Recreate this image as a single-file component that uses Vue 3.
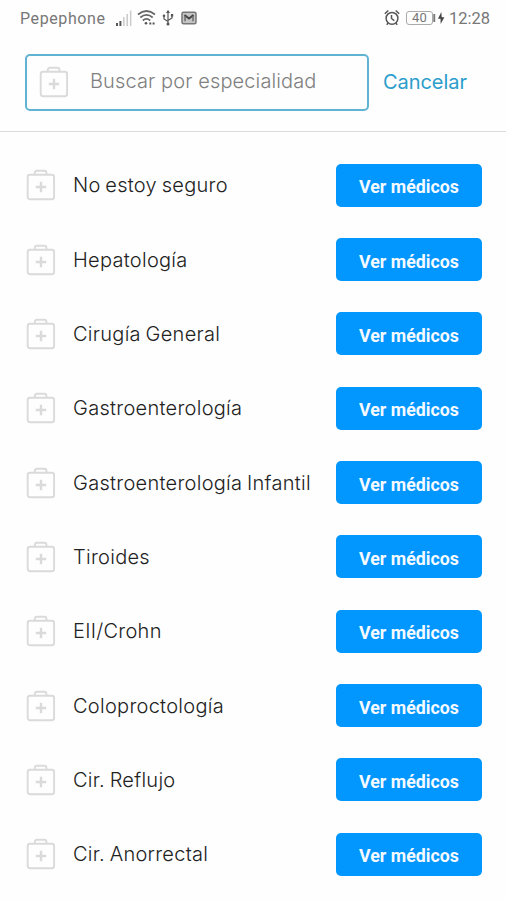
<script setup>
import { h } from 'vue'

const specialties = [
  'No estoy seguro',
  'Hepatología',
  'Cirugía General',
  'Gastroenterología',
  'Gastroenterología Infantil',
  'Tiroides',
  'EII/Crohn',
  'Coloproctología',
  'Cir. Reflujo',
  'Cir. Anorrectal',
]

const KitIcon = () =>
  h('svg', { width: 30, height: 32, viewBox: '0 0 30 32', fill: 'none', stroke: 'currentColor' }, [
    h('rect', { x: 1.7, y: 5.7, width: 26.4, height: 24.6, rx: 2.2, 'stroke-width': 1.9 }),
    h('path', { d: 'M8.8 5.5V3.8Q8.8 1.8 10.8 1.8H18.4Q20.4 1.8 20.4 3.8V5.5', 'stroke-width': 1.9 }),
    h('path', { d: 'M15 12.8V23.2M9.8 18H20.2', 'stroke-width': 2.4 }),
  ])
</script>

<template>
  <main class="screen">
    <header class="status">
      <span class="carrier">Pepephone</span>
      <svg class="signal" width="17" height="17" viewBox="0 0 17 17">
        <path d="M1 13h2v3H1zM4.4 11h2v5h-2z" fill="#555" />
        <path d="M8 7h1.6v9H8zM11.4 4H13v12h-1.6zM14.9 .5h1.5V16h-1.5z" fill="#ccc" />
      </svg>
      <svg class="wifi" width="20" height="18" viewBox="0 0 20 18" fill="none" stroke="#666" stroke-width="1.7">
        <path d="M1 5.5Q9.5 -1.5 18 5.5M3.3 8.5Q9.5 3.3 15.7 8.5M5.8 11.5Q9.5 8.3 13.2 11.5" />
        <circle cx="9" cy="14.3" r="1.3" fill="#555" stroke="none" />
        <path d="M12.3 14.5h2M15.6 14.5h2" stroke-width="2.2" stroke="#555" />
      </svg>
      <svg class="usb" width="12" height="18" viewBox="0 0 12 18" fill="none" stroke="#555" stroke-width="1.2">
        <path d="M6 3v12M6 12.5L2 10V7M6 11.5L10 9V6.5" />
        <path d="M6 .8L8 4H4z" fill="#555" stroke="none" />
        <circle cx="2" cy="6.8" r="1.3" fill="#555" stroke="none" />
        <path d="M8.9 5h2.3v2.6H8.9z" fill="#555" stroke="none" />
        <circle cx="6" cy="15" r="1.5" fill="#555" stroke="none" />
      </svg>
      <svg class="mail" width="16" height="14" viewBox="0 0 16 14" fill="none" stroke="#777">
        <rect x="1" y="1.2" width="14" height="11.6" rx="1.5" stroke-width="1.5" fill="#c4c4c4" />
        <path d="M3.5 4L8 7.500L12.5 4" stroke="#444" stroke-width="2" />
        <path d="M4 5V10.300M12 5V10.300" stroke="#666" stroke-width="1.400" />
      </svg>
      <svg class="alarm" width="16" height="18" viewBox="0 0 16 18" fill="none" stroke="#555" stroke-width="1.5">
        <circle cx="8" cy="9.3" r="5.9" />
        <path d="M.8 4.7L4.3 1.5M15.2 4.7L11.7 1.5M7.5 6V9.5L10.3 11.7M4 14L2.8 15.800M12 14l1.2 1.8" />
      </svg>
      <span class="battery">40</span>
      <svg class="charge" width="12" height="14" viewBox="0 0 12 14">
        <path d="M.3 3h1.9v8H.3z" fill="#777" />
        <path d="M8.3 1L5 7.7H7.600L7.6 13L11.4 6.2H8.7z" fill="#444" />
      </svg>
      <span class="clock">12:28</span>
    </header>

    <section class="search">
      <div class="field">
        <KitIcon class="kit" />
        <span class="placeholder">Buscar por especialidad</span>
      </div>
      <span class="cancel">Cancelar</span>
    </section>

    <ul class="list">
      <li v-for="name in specialties" :key="name" class="row">
        <KitIcon class="kit" />
        <span class="name">{{ name }}</span>
        <button class="action" type="button">Ver médicos</button>
      </li>
    </ul>
  </main>
</template>

<style>
body {
  margin: 0;
  background: #fefefe;
}
</style>

<style scoped>
.screen {
  width: 506px;
  height: 900px;
  overflow: hidden;
  box-sizing: border-box;
  font-family: Inter, Roboto, sans-serif;
}
.status {
  display: flex;
  align-items: center;
  height: 36px;
  padding: 0 16px 0 20px;
  box-sizing: border-box;
  font-family: Roboto, sans-serif;
  color: #777;
}
.status svg {
  flex: none;
}
.carrier {
  width: 95px;
  font-size: 16px;
  letter-spacing: 0.6px;
}
.wifi {
  margin-left: 5px;
}
.usb {
  margin-left: 5px;
}
.mail {
  margin-left: 7px;
}
.alarm {
  margin-left: auto;
}
.battery {
  width: 27px;
  height: 14px;
  margin-left: 6px;
  box-sizing: border-box;
  border: 1px solid #aaa;
  border-radius: 3px;
  font-size: 13px;
  line-height: 12px;
  text-align: center;
}
.clock {
  margin-left: 4px;
  font-size: 16.5px;
}
.search {
  display: flex;
  align-items: center;
  height: 96px;
  padding: 0 0 3px 25px;
  box-sizing: border-box;
  border-bottom: 1.5px solid #dcdcdc;
}
.field {
  display: flex;
  align-items: center;
  width: 344px;
  height: 57px;
  padding-left: 12px;
  box-sizing: border-box;
  border: 2px solid #60b3d3;
  border-radius: 5px;
}
.kit {
  flex: none;
  color: #dadada;
}
.placeholder {
  margin-left: 21px;
  padding-bottom: 2px;
  font-size: 20px;
  font-weight: 300;
  letter-spacing: 0.12px;
  color: #808080;
}
.cancel {
  margin-left: 14px;
  font-size: 20px;
  letter-spacing: -0.06px;
  color: #2b9dcc;
}
.list {
  margin: 0;
  padding: 16px 24px 0 26px;
  list-style: none;
}
.row {
  display: flex;
  align-items: center;
  height: 74.35px;
}
.name {
  margin-left: 17px;
  font-size: 20px;
  font-weight: 300;
  letter-spacing: 0.28px;
  word-spacing: -1.2px;
  color: #222;
  white-space: nowrap;
}
.action {
  width: 146px;
  height: 43px;
  margin-left: auto;
  padding: 3px 0 0;
  border: 0;
  border-radius: 5px;
  background: #0297ff;
  color: #f4faff;
  font: 700 17.8px Roboto, sans-serif;
}
</style>
